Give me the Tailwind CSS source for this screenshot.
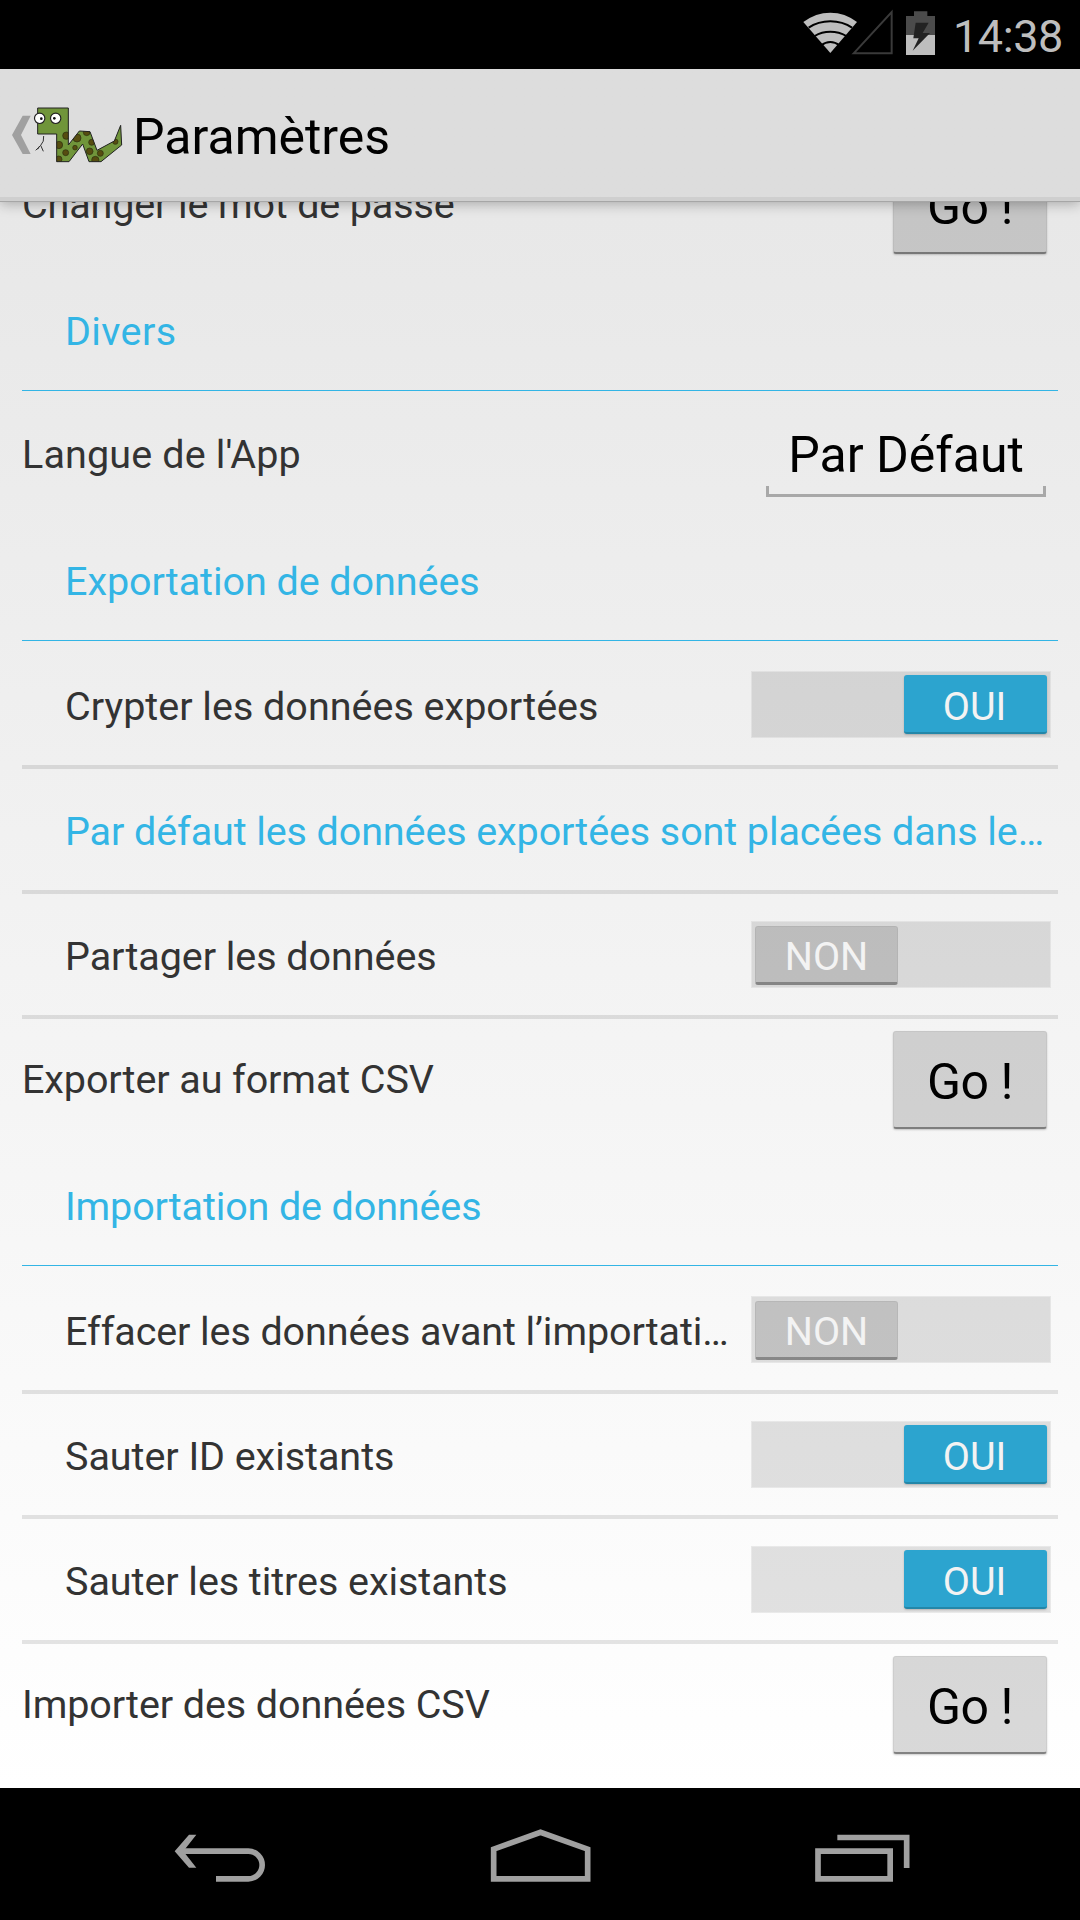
<!DOCTYPE html>
<html lang="fr">
<head>
<meta charset="utf-8">
<title>Paramètres</title>
<script src="https://cdn.jsdelivr.net/npm/@tailwindcss/browser@4"></script>
</head>
<body class="bg-black">
<div class="flex h-[1920px] w-[1080px] flex-col overflow-hidden font-[Roboto,sans-serif] text-[39.5px] leading-[47px] text-[#333333]">

  <!-- Status bar -->
  <div class="flex h-[69px] shrink-0 justify-end bg-black pr-[17px]">
    <svg class="h-[69px] w-[160px]" viewBox="60 0 480 207">
      <path d="M151 159L70 66Q107 38 151 38T231 66Z" fill="#bebebe"/>
      <path d="M86 83Q114 64 151 64T216 83M104 108Q125 95 151 95T199 108M124 136Q136 126 151 126T178 136" fill="none" stroke="#000" stroke-width="6"/>
      <path d="M221 160L335 36V160Z" fill="none" stroke="#3a3a3a" stroke-width="6"/>
      <path d="M378 48H402V34H442V48H465V105H378Z" fill="#4b4b4b"/>
      <path d="M378 105H465V165H378Z" fill="#bebebe"/>
      <path d="M407 68H446L428 99H450L398 152L416 115H400Z" fill="#222"/>
    </svg>
    <span class="-ml-[7px] pt-[10px] text-[45px] leading-[54px] tracking-[-0.4px] text-[#bebebe]">14:38</span>
  </div>

  <!-- Action bar -->
  <header class="relative z-10 flex h-[133px] shrink-0 items-center border-b border-[#a6a6a6] bg-linear-to-b from-[#dddddd] from-[128px] to-[#cfcfcf] to-[128px] shadow-[0_2px_12px_rgba(0,0,0,0.28)]">
    <svg class="h-[132px] w-[133px]" viewBox="0 -63 399 396">
      <defs>
        <path id="body" d="M113 54H205V165L238 123L270 125L291 181L343 153L362 106L365 165L303 215H267L248 162L207 215H170V132H113Z"/>
        <clipPath id="skin"><use href="#body"/></clipPath>
      </defs>
      <path d="M36 135L68 77H92L63 135L92 192H68Z" fill="#a0a0a0"/>
      <path d="M131 138Q133 155 122 166L107 181M122 166L130 184M119 168L113 178" fill="none" stroke="#333" stroke-width="3"/>
      <use href="#body" fill="#70953a"/>
      <g clip-path="url(#skin)" fill="#564d10" stroke="#2c3010" stroke-width="2">
        <circle cx="199" cy="137" r="11"/><circle cx="177" cy="165" r="11"/><circle cx="197" cy="188" r="9"/><circle cx="176" cy="208" r="10"/>
        <circle cx="231" cy="144" r="12"/><circle cx="225" cy="173" r="7"/><circle cx="260" cy="127" r="10"/><circle cx="275" cy="157" r="9"/>
        <circle cx="269" cy="184" r="10"/><circle cx="301" cy="190" r="9"/><circle cx="286" cy="210" r="11"/><circle cx="346" cy="155" r="8"/>
      </g>
      <use href="#body" fill="none" stroke="#222" stroke-width="3"/>
      <g fill="#fff" stroke="#222" stroke-width="3.5"><circle cx="119" cy="85" r="15.5"/><circle cx="167" cy="85" r="15.5"/></g>
      <circle cx="124" cy="86" r="4" fill="#111"/><circle cx="163" cy="85" r="4" fill="#111"/>
    </svg>
    <h1 class="pt-[3px] text-[50px] leading-[60px] text-black">Paramètres</h1>
  </header>

  <!-- Settings list -->
  <main class="-mt-[58px] flex h-[1644px] shrink-0 flex-col bg-linear-to-b from-[#e7e7e7] to-white pr-[22px] pl-[22px] whitespace-nowrap">
    <div class="flex h-[122px] items-end justify-between">
      <span class="pb-[38px] tracking-[-0.14px]">Changer le mot de passe</span>
      <button class="mr-[11px] mb-[12px] h-[98px] w-[154px] rounded-[3px] border border-b-2 border-black/5 border-b-black/40 bg-black/15 pt-[5px] text-[50px] leading-[60px] tracking-[-0.5px] text-black shadow-[0_1px_2px_rgba(0,0,0,0.2)]">Go !</button>
    </div>
    <div class="flex h-[125px] items-end border-b border-[#33b5e5] pb-[35px] pl-[43px] tracking-[0.4px] text-[#33b5e5]">Divers</div>
    <div class="flex h-[125px] items-end justify-between">
      <span class="pb-[38px] tracking-[0.15px]">Langue de l'App</span>
      <div class="relative mr-[12px] mb-[19px] flex h-[74px] w-[280px] items-start justify-center pt-[2px] text-[50px] leading-[60px] text-black">
        <span>Par Défaut</span>
        <span class="absolute inset-x-0 bottom-0 h-[11px] border-3 border-t-0 border-[#a8a8a8]"></span>
      </div>
    </div>
    <div class="flex h-[125px] items-end border-b border-[#33b5e5] pb-[35px] pl-[43px] tracking-[-0.06px] text-[#33b5e5]">Exportation de données</div>
    <div class="flex h-[128px] items-end justify-between border-b-4 border-black/10 pr-[7px] pl-[43px]">
      <span class="pb-[35px]">Crypter les données exportées</span>
      <div class="mb-[27px] flex h-[67px] w-[300px] justify-end border border-white/30 bg-black/11 px-[3px] py-[3px]">
        <div class="h-[59px] w-[143px] rounded-[3px] border-b-2 border-[#2387a9] bg-[#2ca4cf] pt-[8px] pr-[2px] text-center text-[#f3f3f3] shadow-[0_1px_2px_rgba(0,0,0,0.2)]">OUI</div>
      </div>
    </div>
    <div class="flex h-[125px] items-end border-b-4 border-black/10 pb-[35px] pl-[43px] tracking-[-0.1px] text-[#33b5e5]">Par défaut les données exportées sont placées dans le…</div>
    <div class="flex h-[125px] items-end justify-between border-b-4 border-black/10 pr-[7px] pl-[43px]">
      <span class="pb-[35px] tracking-[-0.05px]">Partager les données</span>
      <div class="mb-[27px] flex h-[67px] w-[300px] border border-white/30 bg-black/11 px-[3px] pt-[4px]">
        <div class="h-[59px] w-[143px] rounded-[3px] border border-b-3 border-black/5 border-b-black/30 bg-black/12 pt-[6px] text-center text-[#f3f3f3]">NON</div>
      </div>
    </div>
    <div class="flex h-[122px] items-end justify-between">
      <span class="pb-[38px] tracking-[-0.1px]">Exporter au format CSV</span>
      <button class="mr-[11px] mb-[12px] h-[98px] w-[154px] rounded-[3px] border border-b-2 border-black/5 border-b-black/40 bg-black/15 pt-[5px] text-[50px] leading-[60px] tracking-[-0.5px] text-black shadow-[0_1px_2px_rgba(0,0,0,0.2)]">Go !</button>
    </div>
    <div class="flex h-[125px] items-end border-b border-[#33b5e5] pb-[35px] pl-[43px] tracking-[-0.13px] text-[#33b5e5]">Importation de données</div>
    <div class="flex h-[128px] items-end justify-between border-b-4 border-black/10 pr-[7px] pl-[43px]">
      <span class="pb-[35px] tracking-[-0.1px]">Effacer les données avant l’importati…</span>
      <div class="mb-[27px] flex h-[67px] w-[300px] shrink-0 border border-white/30 bg-black/11 px-[3px] pt-[4px]">
        <div class="h-[59px] w-[143px] rounded-[3px] border border-b-3 border-black/5 border-b-black/30 bg-black/12 pt-[6px] text-center text-[#f3f3f3]">NON</div>
      </div>
    </div>
    <div class="flex h-[125px] items-end justify-between border-b-4 border-black/10 pr-[7px] pl-[43px]">
      <span class="pb-[35px] tracking-[-0.05px]">Sauter ID existants</span>
      <div class="mb-[27px] flex h-[67px] w-[300px] justify-end border border-white/30 bg-black/11 px-[3px] py-[3px]">
        <div class="h-[59px] w-[143px] rounded-[3px] border-b-2 border-[#2387a9] bg-[#2ca4cf] pt-[8px] pr-[2px] text-center text-[#f3f3f3] shadow-[0_1px_2px_rgba(0,0,0,0.2)]">OUI</div>
      </div>
    </div>
    <div class="flex h-[125px] items-end justify-between border-b-4 border-black/10 pr-[7px] pl-[43px]">
      <span class="pb-[35px] tracking-[-0.06px]">Sauter les titres existants</span>
      <div class="mb-[27px] flex h-[67px] w-[300px] justify-end border border-white/30 bg-black/11 px-[3px] py-[3px]">
        <div class="h-[59px] w-[143px] rounded-[3px] border-b-2 border-[#2387a9] bg-[#2ca4cf] pt-[8px] pr-[2px] text-center text-[#f3f3f3] shadow-[0_1px_2px_rgba(0,0,0,0.2)]">OUI</div>
      </div>
    </div>
    <div class="flex h-[122px] items-end justify-between">
      <span class="pb-[38px] tracking-[-0.08px]">Importer des données CSV</span>
      <button class="mr-[11px] mb-[12px] h-[98px] w-[154px] rounded-[3px] border border-b-2 border-black/5 border-b-black/40 bg-black/15 pt-[5px] text-[50px] leading-[60px] tracking-[-0.5px] text-black shadow-[0_1px_2px_rgba(0,0,0,0.2)]">Go !</button>
    </div>
  </main>

  <!-- Navigation bar -->
  <nav class="flex h-[132px] shrink-0 items-end justify-between bg-black pr-[170px] pb-[38px] pl-[174px]">
    <svg class="h-[48px] w-[93px]" viewBox="132 162 279 144">
      <path d="M156 213.500H355A41 41 0 0 1 355 296.500H258" fill="none" stroke="#a0a0a0" stroke-width="17"/>
      <path d="M134 213.500L177 164H199L160 213.500L199 263H177Z" fill="#a0a0a0"/>
    </svg>
    <svg class="mr-px h-[54px] w-[101px]" viewBox="1080 144 303 162">
      <path d="M1091 296.500V207.500L1231.500 157L1373 207.500V296.500Z" fill="none" stroke="#a0a0a0" stroke-width="17"/>
    </svg>
    <svg class="h-[48px] w-[95px]" viewBox="345 582 285 144">
      <path d="M354 633.500H570.500V716.500H354ZM412 592.500H620V684" fill="none" stroke="#a0a0a0" stroke-width="17"/>
    </svg>
  </nav>
</div>
</body>
</html>
